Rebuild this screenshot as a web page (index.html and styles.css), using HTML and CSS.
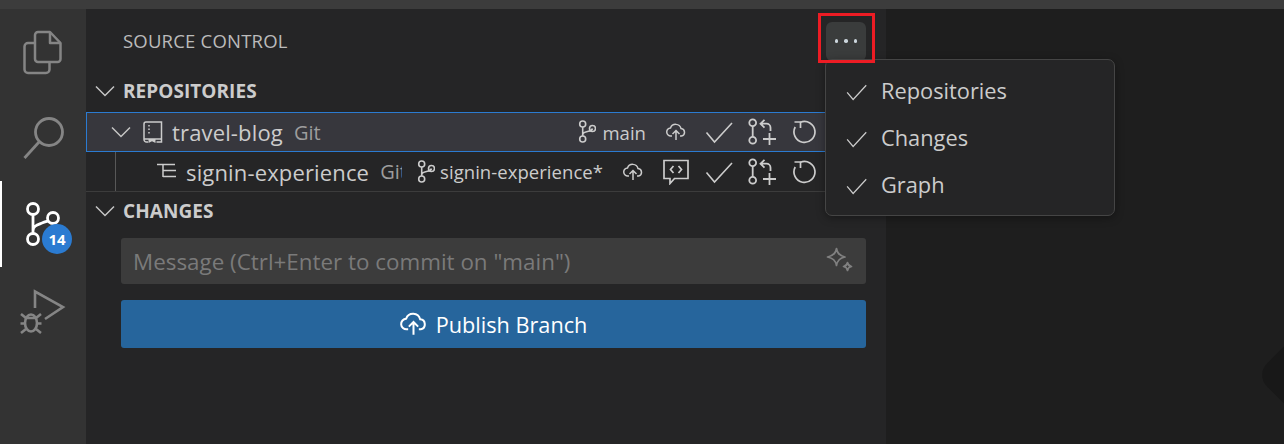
FILE: index.html
```html
<!DOCTYPE html>
<html lang="en">
<head>
<meta charset="utf-8">
<title>Source Control</title>
<link rel="stylesheet" href="styles.css">
</head>
<body>
<svg class="defs" width="0" height="0" aria-hidden="true">
  <symbol id="i-chev" viewBox="0 0 20 20"><path d="M1 5.500l9 9 9-9" fill="none" stroke="currentColor" stroke-width="1.500"/></symbol>
  <symbol id="i-branch" viewBox="0 0 18 24"><g fill="none" stroke="currentColor" stroke-width="1.600"><circle cx="4.700" cy="4" r="3"/><circle cx="4.700" cy="19" r="3"/><circle cx="14.500" cy="8.500" r="3"/><path d="M4.700 7v9M4.700 15c0-2.500 2-3 4.800-3.500 2.500-.5 4.500-.5 5-3"/></g></symbol>
  <symbol id="i-cloud" viewBox="0 0 20 18"><g fill="none" stroke="currentColor" stroke-width="1.500"><path d="M6 13H5A4 4 0 0 1 4.500 5 5.500 5.500 0 0 1 15 5.500 3.800 3.800 0 0 1 15.500 13H14"/><path d="M10 17V8M6.500 11L10 7.500l3.500 3.500"/></g></symbol>
  <symbol id="i-check" viewBox="0 0 28 24"><path d="M1.500 12.500l8 9.500L27 3" fill="none" stroke="currentColor" stroke-width="1.600"/></symbol>
  <symbol id="i-pr" viewBox="0 0 28 28"><g fill="none" stroke="currentColor" stroke-width="1.800"><circle cx="4.700" cy="4.700" r="3.400"/><circle cx="4.700" cy="22.300" r="3.400"/><path d="M4.700 8.100v10.800M13 5.700h5.500a4 4 0 0 1 4 4V13M16.500 1.800l-4 3.900 4 3.900M21.500 15v12M15 21h13"/></g></symbol>
  <symbol id="i-refresh" viewBox="0 0 26 26"><g fill="none" stroke="currentColor" stroke-width="1.700"><path d="M8.500 3.200A10.500 10.500 0 1 1 3.200 8"/><path d="M2.500 3h6v6"/></g></symbol>
  <symbol id="i-comment" viewBox="0 0 28 26"><g fill="none" stroke="currentColor" stroke-width="1.700"><path d="M2 1.500h24v18H12.500L8 24.500v-5H2z"/><path d="M11.500 7l-3 3.500 3 3.500M16.500 7l3 3.500-3 3.500"/></g></symbol>
</svg>

<div class="titlebar"></div>
<div class="workbench">
  <nav class="activity">
    <div class="act">
      <svg class="act-icon" viewBox="0 0 86 86"><g fill="none" stroke="currentColor" stroke-width="2.500" stroke-linejoin="round"><path d="M38 23H50L60.500 34V50a3 3 0 0 1-3 3H38a3 3 0 0 1-3-3V26a3 3 0 0 1 3-3z"/><path d="M50 23v11h10.500"/><path d="M35 34H28a3.500 3.500 0 0 0-3.500 3.500V60.500A3.500 3.500 0 0 0 28 64H46a3.500 3.500 0 0 0 3.500-3.500V53"/></g></svg>
    </div>
    <div class="act">
      <svg class="act-icon" viewBox="0 0 86 86"><g fill="none" stroke="currentColor" stroke-width="2.800"><circle cx="49" cy="37" r="13.500"/><path d="M39.500 46.500L24.500 63"/></g></svg>
    </div>
    <div class="act act-on">
      <svg class="act-icon" viewBox="0 0 86 86"><g fill="none" stroke="currentColor" stroke-width="2.800"><circle cx="33" cy="28" r="5.500"/><circle cx="33" cy="58" r="5.500"/><circle cx="53" cy="37" r="5.500"/><path d="M33 33.500v19M33 50c0-5 4-6 9-8 4-1.500 6-2 7-2.500"/></g></svg>
      <span class="badge">14</span>
    </div>
    <div class="act">
      <svg class="act-icon" viewBox="0 0 86 86"><g fill="none" stroke="currentColor" stroke-width="2.600"><path d="M35 41V24.500L63 40 45 52"/><ellipse cx="31" cy="56" rx="6" ry="8.500"/><path d="M25.500 51h11M21 47l5 4M41 47l-5 4M20.500 56.500h5M41.500 56.500h-5M21 66l5-4M41 66l-5-4"/></g></svg>
    </div>
  </nav>

  <aside class="sidebar">
    <header class="side-head">
      <span class="side-title">SOURCE CONTROL</span>
      <button class="more" type="button" aria-label="More"><span></span><span></span><span></span></button>
    </header>

    <div class="section-head section-repos">
      <svg class="chev"><use href="#i-chev"/></svg>
      <span>REPOSITORIES</span>
    </div>

    <div class="repo repo-sel">
      <div class="repo-main">
        <svg class="chev chev-row"><use href="#i-chev"/></svg>
        <svg class="repo-icon" viewBox="0 0 20 22"><g fill="none" stroke="currentColor" stroke-width="1.500"><path d="M1 3a2 2 0 0 1 2-2h15.500v20H13.500M1 3v15.500A2.500 2.500 0 0 0 3.500 21H5M1.500 18h17"/><path d="M6 4v1.500M6 7.500V9M6 11v1.500"/></g><path d="M5.500 18h7v4l-3.500-1.800L5.500 22z" fill="currentColor"/></svg>
        <span class="repo-name">travel-blog</span>
        <span class="repo-desc">Git</span>
      </div>
      <div class="branch"><svg class="i-branch"><use href="#i-branch"/></svg><span>main</span></div>
      <div class="cell"><svg class="i-cloud"><use href="#i-cloud"/></svg></div>
      <div class="cell"><svg class="i-check"><use href="#i-check"/></svg></div>
      <div class="cell"><svg class="i-pr"><use href="#i-pr"/></svg></div>
      <div class="cell"><svg class="i-refresh"><use href="#i-refresh"/></svg></div>
    </div>

    <div class="repo repo-child">
      <div class="guide"></div>
      <div class="repo-main repo-main-child">
        <svg class="tree-icon" viewBox="0 0 20 20"><path d="M0 2.500h18M6 2.500V15M6 8.500h13M6 14.500h13" fill="none" stroke="currentColor" stroke-width="1.500"/></svg>
        <span class="repo-name">signin-experience</span>
        <span class="repo-desc">Git</span>
      </div>
      <div class="branch"><svg class="i-branch"><use href="#i-branch"/></svg><span>signin-experience*</span></div>
      <div class="cell"><svg class="i-cloud"><use href="#i-cloud"/></svg></div>
      <div class="cell"><svg class="i-comment"><use href="#i-comment"/></svg></div>
      <div class="cell"><svg class="i-check"><use href="#i-check"/></svg></div>
      <div class="cell"><svg class="i-pr"><use href="#i-pr"/></svg></div>
      <div class="cell"><svg class="i-refresh"><use href="#i-refresh"/></svg></div>
    </div>

    <div class="section-head section-changes">
      <svg class="chev"><use href="#i-chev"/></svg>
      <span>CHANGES</span>
    </div>

    <div class="changes-body">
      <div class="input">
        <span class="placeholder">Message (Ctrl+Enter to commit on "main")</span>
        <svg class="sparkle" viewBox="0 0 28 28"><g fill="none" stroke="currentColor" stroke-width="1.700" stroke-linejoin="round"><path d="M10.500 1.500c.8 5 3 7.500 8.500 8.500-5.500 1-7.700 3.500-8.500 8.500C9.700 13.500 7 11 1.500 10 7 9 9.700 6.500 10.500 1.500z"/><path d="M21.500 15.500c.4 2.500 1.500 3.600 4 4-2.500.4-3.600 1.500-4 4-.4-2.500-1.500-3.600-4-4 2.500-.4 3.600-1.500 4-4z"/></g></svg>
      </div>
      <button class="publish" type="button"><svg class="i-cloud-lg"><use href="#i-cloud"/></svg><span>Publish Branch</span></button>
    </div>
  </aside>

  <main class="editor"><div class="blob"></div></main>
</div>

<div class="menu">
  <div class="menu-item"><svg class="menu-check"><use href="#i-check"/></svg><span>Repositories</span></div>
  <div class="menu-item"><svg class="menu-check"><use href="#i-check"/></svg><span>Changes</span></div>
  <div class="menu-item"><svg class="menu-check"><use href="#i-check"/></svg><span>Graph</span></div>
</div>
<div class="redbox"></div>
</body>
</html>
```

FILE: styles.css
```css
* { box-sizing: border-box; }
html, body { margin: 0; height: 100%; overflow: hidden; }
body {
  position: relative;
  width: 1284px;
  height: 444px;
  display: flex;
  flex-direction: column;
  background: #1e1e1e;
  color: #cccccc;
  font-family: "Open Sans", "Noto Sans", sans-serif;
  font-size: 20px;
}
svg { display: block; flex: none; }
.defs { position: absolute; }

.titlebar { height: 9px; background: #3c3c3c; flex: none; }
.workbench { flex: 1; display: flex; min-height: 0; }

.activity { width: 86px; flex: none; background: #333333; }
.act { position: relative; height: 86px; color: #858585; }
.act-on { color: #ffffff; box-shadow: inset 2px 0 0 #ffffff; }
.act-icon { width: 86px; height: 86px; }
.badge {
  position: absolute;
  left: 42px;
  top: 43px;
  width: 30px;
  height: 30px;
  border-radius: 50%;
  background: #2b7bd1;
  color: #fff;
  font-size: 15px;
  font-weight: 700;
  line-height: 30px;
  text-align: center;
}

.sidebar { width: 800px; flex: none; background: #252526; display: flex; flex-direction: column; }
.side-head { height: 64px; flex: none; display: flex; align-items: center; justify-content: space-between; padding: 0 20px 0 37px; }
.side-title { font-size: 18.500px; letter-spacing: 0.200px; color: #bbbbbb; padding-bottom: 2px; }
.more {
  width: 40px;
  height: 39px;
  border: 0;
  padding: 0;
  border-radius: 6px;
  background: #3a3c3c;
  display: flex;
  align-items: center;
  justify-content: center;
  gap: 6px;
}
.more span { width: 3.500px; height: 3.500px; border-radius: 50%; background: #ccd6dd; }

.section-head { display: flex; align-items: center; font-weight: 700; font-size: 19px; letter-spacing: 0.050px; color: #cccccc; padding-left: 9px; }
.section-repos { height: 39px; padding-bottom: 4px; }
.section-changes { height: 39px; border-top: 1px solid #3c3c3c; }
.chev { width: 20px; height: 20px; margin-right: 8px; color: #c5c5c5; }

.repo { position: relative; display: flex; align-items: center; height: 40px; padding-right: 60px; }
.repo-sel { background: #37373d; box-shadow: inset 0 0 0 1px #2b7bd1; }
.repo-child { height: 39px; }
.repo-main { flex: 1; min-width: 0; display: flex; align-items: center; overflow: hidden; white-space: nowrap; padding-left: 25px; }
.repo-main-child { padding-left: 71px; flex: none; width: 316px; margin-right: auto; }
.chev-row { margin-right: 12px; }
.repo-icon { width: 20px; height: 22px; margin-right: 9px; }
.tree-icon { width: 20px; height: 20px; margin-right: 9px; }
.repo-name { font-size: 22px; letter-spacing: 0.150px; color: #cccccc; }
.repo-desc { font-size: 20px; margin-left: 11px; color: #9d9d9d; }
.guide { position: absolute; left: 29px; top: 0; bottom: 0; width: 1px; background: #585858; }

.branch { display: flex; align-items: center; font-size: 18.500px; letter-spacing: 0.050px; white-space: nowrap; color: #cccccc; gap: 6px; margin-right: 8px; }
.repo-child .branch { gap: 5px; }
.i-branch { width: 18px; height: 24px; }
.cell { width: 43px; flex: none; display: flex; justify-content: center; color: #cccccc; }
.i-cloud { width: 20px; height: 18px; }
.i-check { width: 28px; height: 24px; }
.i-pr { width: 28px; height: 28px; }
.i-refresh { width: 26px; height: 26px; }
.i-comment { width: 28px; height: 26px; }

.changes-body { padding: 8px 20px 0 35px; display: flex; flex-direction: column; gap: 16px; }
.input {
  height: 46px;
  border-radius: 3px;
  background: #3c3c3c;
  display: flex;
  align-items: center;
  justify-content: space-between;
  padding: 0 12px;
  color: #7a7a7a;
}
.placeholder { font-size: 22.400px; }
.sparkle { width: 28px; height: 28px; color: #808080; }
.publish {
  height: 48px;
  border: 0;
  border-radius: 3px;
  background: #26659c;
  color: #ffffff;
  font: inherit;
  font-size: 21.700px;
  display: flex;
  align-items: center;
  justify-content: center;
  gap: 9px;
  padding: 0;
}
.i-cloud-lg { width: 27px; height: 24px; }

.editor { flex: 1; position: relative; overflow: hidden; background: #1e1e1e; }
.blob {
  position: absolute;
  left: 382px;
  top: 336px;
  width: 60px;
  height: 60px;
  border-radius: 16px;
  transform: rotate(45deg);
  background: #181818;
}

.menu {
  position: absolute;
  left: 825px;
  top: 59px;
  width: 290px;
  height: 157px;
  padding: 8px 0;
  background: #252526;
  border: 1px solid #454545;
  border-radius: 7px;
  box-shadow: 0 2px 8px rgba(0, 0, 0, 0.36);
}
.menu-item { height: 47px; display: flex; align-items: center; font-size: 21.800px; padding-left: 20px; gap: 14px; }
.menu-item span { padding-bottom: 2px; }
.menu-check { width: 21px; height: 20px; }

.redbox {
  position: absolute;
  left: 818px;
  top: 13px;
  width: 57px;
  height: 50px;
  border: 3px solid #ed1c24;
}
```
